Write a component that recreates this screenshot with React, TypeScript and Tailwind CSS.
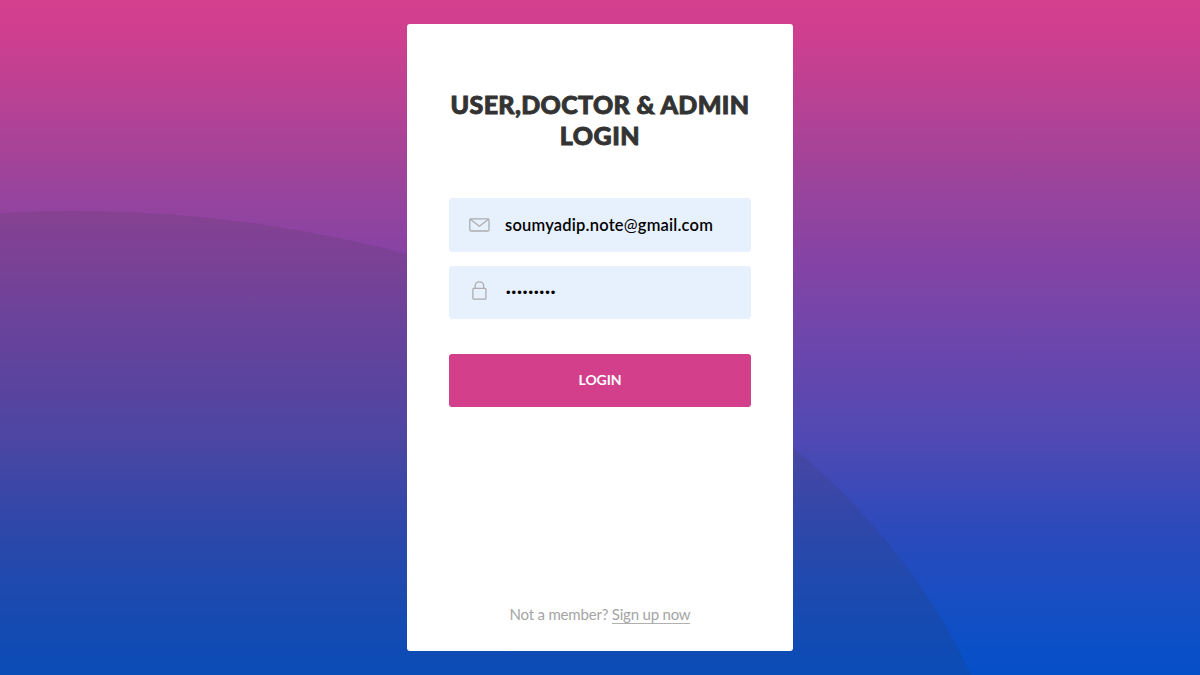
import type { ReactNode } from "react";

function Backdrop() {
  return (
    <svg
      className="absolute inset-0 h-full w-full"
      viewBox="0 0 1200 675"
      preserveAspectRatio="none"
      aria-hidden="true"
    >
      <defs>
        <linearGradient id="sky" x1="0" y1="0" x2="0" y2="1">
          <stop offset="0" stopColor="#d53f8d" />
          <stop offset="0.06" stopColor="#cd3f8f" />
          <stop offset="0.27" stopColor="#9b449b" />
          <stop offset="0.37" stopColor="#8843a4" />
          <stop offset="0.65" stopColor="#5049b3" />
          <stop offset="0.78" stopColor="#2d4abb" />
          <stop offset="0.9" stopColor="#154ec3" />
          <stop offset="1" stopColor="#0450c9" />
        </linearGradient>
      </defs>
      <rect width="1200" height="675" fill="url(#sky)" />
      <ellipse cx="75" cy="882" rx="942" ry="671" fill="#333333" fillOpacity="0.13" />
    </svg>
  );
}

function MailIcon() {
  return (
    <svg className="h-[14px] w-[21px]" viewBox="0 0 21 14" fill="none" stroke="#adadad" strokeWidth="1.3" strokeLinejoin="round" strokeLinecap="round">
      <rect x="0.8" y="0.8" width="19.2" height="12.2" rx="1.2" />
      <path d="M1.3 1.3 10.4 8.2 19.5 1.3" />
    </svg>
  );
}

function LockIcon() {
  return (
    <svg className="h-[19px] w-[15px]" viewBox="0 0 15 19" fill="none" stroke="#adadad" strokeWidth="1.3">
      <rect x="0.9" y="7.3" width="13" height="10.8" rx="0.9" />
      <path d="M3.1 7.3V5.1a4.3 4.3 0 0 1 8.6 0v2.2" />
    </svg>
  );
}

function Field({ icon, children }: { icon: ReactNode; children: ReactNode }) {
  return (
    <div className="flex h-full items-center rounded-[3px] bg-[#e7f0fd] pl-[19px]">
      {icon}
      {children}
    </div>
  );
}

export default function App() {
  return (
    <div className="relative flex h-[675px] w-full justify-center overflow-hidden pt-6 font-['Lato','Open_Sans',sans-serif]">
      <Backdrop />
      <main className="relative flex h-[627px] w-[386px] flex-col rounded-[3px] bg-white px-[42px] pt-[65px]">
        <h1 className="text-center text-[25px] leading-[31px] font-black whitespace-nowrap text-[#333333] [-webkit-text-stroke:0.9px_#333333]">
          <span className="-mx-2 block tracking-[0.35px]">USER,DOCTOR &amp; ADMIN</span>
          <span className="block tracking-[0.5px]">LOGIN</span>
        </h1>
        <form className="mt-[47px] flex flex-col" onSubmit={(e) => e.preventDefault()}>
          <div className="h-[54px]">
            <Field icon={<span className="flex w-[22px] justify-center pb-[1px]"><MailIcon /></span>}>
              <span className="ml-[15px] text-[16.5px] leading-5 font-semibold tracking-[0.2px] text-black">
                soumyadip.note<span className="font-normal">@</span>gmail.com
              </span>
            </Field>
          </div>
          <div className="mt-[14px] h-[53px]">
            <Field icon={<span className="flex w-[22px] justify-center pb-[5px]"><LockIcon /></span>}>
              <span className="ml-[16px] pt-[1px] font-['Liberation_Sans',sans-serif] text-[13px] leading-5 tracking-[1.05px] text-black">
                •••••••••
              </span>
            </Field>
          </div>
          <button className="mt-[35px] h-[53px] rounded-[3px] bg-[#d43f8c] pb-[2px] text-[14px] font-bold tracking-[-0.1px] text-white">
            LOGIN
          </button>
        </form>
        <p className="mt-auto mb-[27px] text-center text-[15px] leading-5 tracking-[-0.2px] whitespace-nowrap text-[#a5a5a5]">
          Not a member?{" "}
          <a href="#" className="inline-block border-b border-[#b0b0b0] leading-[18px]">Sign up now</a>
        </p>
      </main>
    </div>
  );
}
